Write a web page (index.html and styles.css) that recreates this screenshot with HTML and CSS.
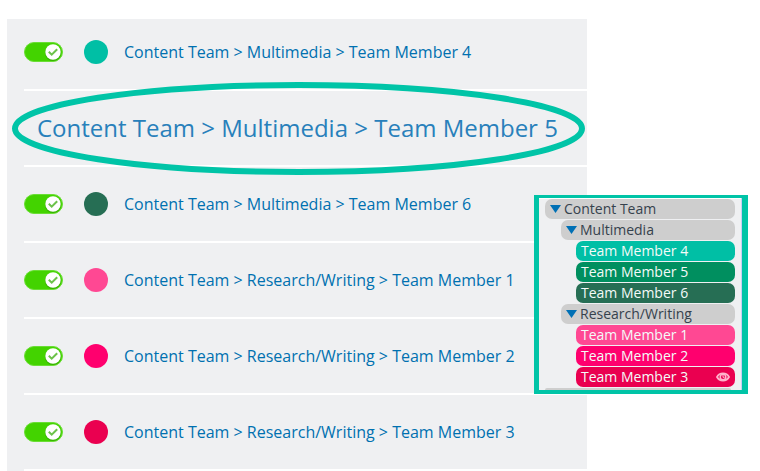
FILE: index.html
```
<!DOCTYPE html>
<html lang="en">
<head>
    <meta charset="UTF-8">
    <meta name="viewport" content="width=device-width, initial-scale=1.0">
    <title>Content Team Calendars</title>
    <link rel="stylesheet" href="styles.css">
</head>
<body>

    <svg class="symbols" aria-hidden="true">
        <symbol id="knob" viewBox="0 0 18 18">
            <circle cx="9" cy="10" r="8" fill="#2e9a00" opacity="0.6"/>
            <circle cx="9" cy="9" r="7.7" fill="#fff"/>
            <path d="M4.800 8.800l2.900 2.900 5.500-5.500" fill="none" stroke="#6cc24a" stroke-width="2"/>
        </symbol>
    </svg>

    <main class="calendars">
        <ul class="rows">
            <li class="row first">
                <span class="switch">
                    <input type="checkbox" id="member4" checked>
                    <svg class="knob"><use href="#knob"/></svg>
                </span>
                <span class="dot teal"></span>
                <label for="member4">Content Team &gt; Multimedia &gt; Team Member 4</label>
            </li>
            <li class="row highlighted">
                <span>Content Team &gt; Multimedia &gt; Team Member 5</span>
                <svg class="ring"><ellipse cx="50%" cy="50%" rx="50%" ry="50%"/></svg>
            </li>
            <li class="row">
                <span class="switch">
                    <input type="checkbox" id="member6" checked>
                    <svg class="knob"><use href="#knob"/></svg>
                </span>
                <span class="dot forest"></span>
                <label for="member6">Content Team &gt; Multimedia &gt; Team Member 6</label>
            </li>
            <li class="row">
                <span class="switch">
                    <input type="checkbox" id="member1" checked>
                    <svg class="knob"><use href="#knob"/></svg>
                </span>
                <span class="dot pink"></span>
                <label for="member1">Content Team &gt; Research/Writing &gt; Team Member 1</label>
            </li>
            <li class="row">
                <span class="switch">
                    <input type="checkbox" id="member2" checked>
                    <svg class="knob"><use href="#knob"/></svg>
                </span>
                <span class="dot magenta"></span>
                <label for="member2">Content Team &gt; Research/Writing &gt; Team Member 2</label>
            </li>
            <li class="row">
                <span class="switch">
                    <input type="checkbox" id="member3" checked>
                    <svg class="knob"><use href="#knob"/></svg>
                </span>
                <span class="dot red"></span>
                <label for="member3">Content Team &gt; Research/Writing &gt; Team Member 3</label>
            </li>
        </ul>
    </main>

    <aside class="tree">
        <button type="button" class="folder">
            <svg class="arrow" viewBox="0 0 11 8"><path d="M0 0h11L5.500 8z"/></svg>Content Team
        </button>
        <div class="branch">
            <button type="button" class="folder">
                <svg class="arrow" viewBox="0 0 11 8"><path d="M0 0h11L5.500 8z"/></svg>Multimedia
            </button>
            <div class="branch members">
                <div class="member teal">Team Member 4</div>
                <div class="member green">Team Member 5</div>
                <div class="member forest">Team Member 6</div>
            </div>
            <button type="button" class="folder">
                <svg class="arrow" viewBox="0 0 11 8"><path d="M0 0h11L5.500 8z"/></svg>Research/Writing
            </button>
            <div class="branch members">
                <div class="member pink">Team Member 1</div>
                <div class="member magenta">Team Member 2</div>
                <div class="member red">
                    Team Member 3
                    <svg class="eye" viewBox="0 0 14 10">
                        <path d="M1 5C3.500 0.200 10.500 0.200 13 5C10.500 9.800 3.500 9.800 1 5z" fill="none" stroke="#ffb3cb" stroke-width="1.800"/>
                        <circle cx="7" cy="5" r="2.800" fill="none" stroke="#ffb3cb" stroke-width="1.500"/>
                        <path d="M7 3v2.300h1.500" fill="none" stroke="#ffb3cb"/>
                    </svg>
                </div>
            </div>
        </div>
        <div class="next-folder"></div>
    </aside>

</body>
</html>
```

FILE: styles.css
```
body {
    margin: 0;
    padding: 19px 173px 0 7px;
    font-family: "Open Sans", "Noto Sans", sans-serif;
    background-color: white;
    position: relative;
}

.symbols {
    position: absolute;
    width: 0;
    height: 0;
}

.calendars {
    background-color: #eff0f2;
    color: #0070b0;
    font-size: 16px;
}

.rows {
    list-style: none;
    margin: 0;
    padding: 0 0 0 17px;
}

.row {
    display: flex;
    align-items: center;
    box-sizing: border-box;
    min-height: 76px;
    border-bottom: 2px solid white;
    white-space: nowrap;
}

.row.first {
    min-height: 72px;
    padding-bottom: 4px;
}

/* Big row with the ring drawn around it */
.row.highlighted {
    position: relative;
    padding: 0 0 2px 13px;
    font-size: 24px;
    color: #2880bb;
}

.ring {
    position: absolute;
    top: -6px;
    left: -9px;
    width: calc(100% + 4px);
    height: calc(100% + 13px);
    overflow: visible;
    fill: none;
    stroke: #00c4a7;
    stroke-width: 6px;
    pointer-events: none;
}

.switch {
    display: grid;
    align-items: center;
    width: 39px;
    margin-right: 21px;
}

.switch input {
    grid-area: 1 / 1;
    appearance: none;
    margin: 0;
    width: 39px;
    height: 20px;
    border: 1px solid #6ade35;
    border-radius: 10px;
    background-color: #43d300;
    cursor: pointer;
}

.knob {
    grid-area: 1 / 1;
    justify-self: end;
    width: 18px;
    height: 18px;
    margin-right: 1px;
    pointer-events: none;
}

.dot {
    width: 24px;
    height: 24px;
    margin-right: 16px;
    border-radius: 50%;
}

.teal { background-color: #00bfa5; }
.green { background-color: #008f5f; }
.forest { background-color: #266e54; }
.pink { background-color: #ff4893; }
.magenta { background-color: #ff006e; }
.red { background-color: #ea0050; }

/* Floating folder list */
.tree {
    position: absolute;
    top: 195px;
    right: 12px;
    display: flex;
    flex-direction: column;
    gap: 1px;
    box-sizing: border-box;
    width: 214px;
    padding: 1px 7px 0 6px;
    border: 4px solid #00c4a7;
    border-width: 3px 6px 4px 5px;
    background-color: #eff0f2;
    box-shadow: inset -1px 0 #c9cdf5, inset 0 1px white;
    font-size: 14px;
}

.branch {
    display: flex;
    flex-direction: column;
    gap: 1px;
    padding-left: 16px;
}

.branch.members {
    padding-left: 15px;
}

.folder,
.member {
    display: flex;
    align-items: center;
    height: 20px;
    border: none;
    border-radius: 7px;
    font-family: inherit;
    font-size: 14px;
    line-height: 20px;
    white-space: nowrap;
}

.folder {
    padding: 0 5px;
    background-color: #cecece;
    color: #36424d;
    cursor: pointer;
}

.arrow {
    width: 11px;
    height: 8px;
    margin-right: 3px;
    fill: #0070b5;
}

.member {
    padding: 0 5px;
    color: #f4fbf9;
}

.eye {
    width: 14px;
    height: 10px;
    margin-left: auto;
}

.next-folder {
    height: 2px;
    margin-right: 4px;
    border-radius: 6px 6px 0 0;
    background-color: #cecece;
}
```
